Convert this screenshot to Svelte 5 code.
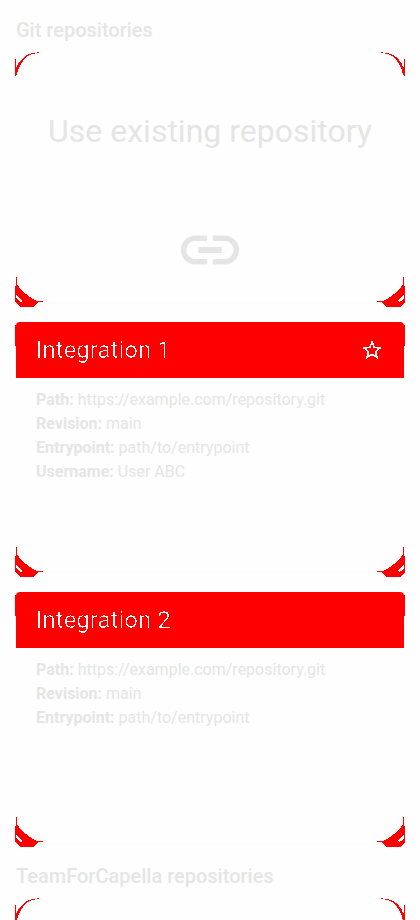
<script>
  const repositories = [
    { name: 'Integration 1', primary: true, rows: [['Path', 'https://example.com/repository.git'], ['Revision', 'main'], ['Entrypoint', 'path/to/entrypoint'], ['Username', 'User ABC']] },
    { name: 'Integration 2', primary: false, rows: [['Path', 'https://example.com/repository.git'], ['Revision', 'main'], ['Entrypoint', 'path/to/entrypoint']] }
  ];
</script>

{#snippet topCorner()}
  <path d="M-1 7H0V15H1L2 12L5 8L8 5L12 2.5L16 1L19 .8V1.5L15 2.3L11 4.8L7 9L4 13.5L2 18L1 23H0V24H-1Z" />
  <path d="M21 0h2v1h-2z" />
{/snippet}

{#snippet bottomCorner()}
  <path fill-rule="evenodd" d="M0 225H1V232L3 235L6 239L10 242L14 245L18 247.5L21 249H27V250H22L21 252L17 255H4L2 253L-1 250V234H0ZM0 243V246L3 249L5 250L6 249L4 246L2 245L1 243Z" />
{/snippet}

{#snippet corners(top)}
  <svg class="corners" viewBox="-1 0 390 256" shape-rendering="crispEdges" fill="red">
    {#if top}
      <g>{@render topCorner()}</g>
      <g transform="translate(388 0) scale(-1 1)">{@render topCorner()}</g>
    {/if}
    <g>{@render bottomCorner()}</g>
    <g transform="translate(388 0) scale(-1 1)">{@render bottomCorner()}</g>
  </svg>
{/snippet}

<svg class="defs" width="0" height="0">
  <filter id="hard-edge" color-interpolation-filters="sRGB">
    <feComponentTransfer><feFuncA type="discrete" tableValues="0 0 1 1" /></feComponentTransfer>
  </filter>
  <filter id="thin-edge" color-interpolation-filters="sRGB">
    <feComponentTransfer><feFuncA type="discrete" tableValues="0 0 0 0 0 1" /></feComponentTransfer>
  </filter>
</svg>

<main>
  <h2>Git repositories</h2>
  <div class="list">
    <section class="card add">
      {@render corners(true)}
      <div class="label">Use existing repository</div>
      <svg class="link" viewBox="0 0 24 24" fill="currentColor"><path d="M3.9 12c0-1.71 1.39-3.1 3.1-3.1h4V7H7c-2.76 0-5 2.24-5 5s2.24 5 5 5h4v-1.9H7c-1.71 0-3.1-1.39-3.1-3.1zM8 13h8v-2H8v2zm9-6h-4v1.9h4c1.71 0 3.1 1.39 3.1 3.1s-1.39 3.1-3.1 3.1h-4V17h4c2.76 0 5-2.24 5-5s-2.24-5-5-5z" /></svg>
    </section>
    {#each repositories as repo}
      <section class="card">
        {@render corners(false)}
        <header>
          <span class="title">{repo.name}</span>
          {#if repo.primary}
            <svg class="star" viewBox="0 0 24 24" fill="currentColor"><path d="M22 9.24l-7.19-.62L12 2 9.19 8.63 2 9.24l5.46 4.73L5.82 21 12 17.27 18.18 21l-1.63-7.03L22 9.24zM12 15.4l-3.76 2.27 1-4.28-3.32-2.88 4.38-.38L12 6.1l1.71 4.04 4.38.38-3.32 2.88 1 4.28L12 15.4z" /></svg>
          {/if}
        </header>
        <div class="details">
          {#each repo.rows as [key, value]}
            <div><b>{key}:</b> {value}</div>
          {/each}
        </div>
      </section>
    {/each}
  </div>
  <h2 class="second">TeamForCapella repositories</h2>
  <section class="card">{@render corners(true)}</section>
</main>

<style>
  :global(body) { background: #fefefe; }
  .defs { position: absolute; }
  main {
    box-sizing: border-box;
    height: 920px;
    overflow: hidden;
    padding: 18px 16px 0;
    font-family: Roboto, sans-serif;
    color: #e5e5e5;
  }
  h2 { margin: 0 0 10px; font-size: 20px; line-height: 24px; font-weight: 500; }
  .second { margin-top: 22px; }
  .list { display: flex; flex-direction: column; gap: 20px; }
  .card {
    position: relative;
    box-sizing: border-box;
    height: 250px;
    border-radius: 4px;
    background: #fefefe;
    box-shadow: 0 1px 3px #00000004;
  }
  .corners { position: absolute; left: -1px; top: 0; width: 390px; height: 256px; pointer-events: none; }
  .add { display: flex; flex-direction: column; align-items: center; }
  .label { margin-top: 60px; font-size: 32px; line-height: 38px; white-space: nowrap; }
  .link { margin-top: 64.5px; width: 70px; height: 70px; }
  header {
    position: relative;
    box-sizing: border-box;
    display: flex;
    align-items: center;
    justify-content: space-between;
    height: 56px;
    padding: 0 20px;
    border-radius: 4px 4px 0 0;
    background: red;
    color: white;
    font-size: 24px;
    font-weight: 400;
  }
  header::before {
    content: '';
    position: absolute;
    z-index: -1;
    left: -1px;
    right: -1px;
    top: 3px;
    height: 21px;
    background: red;
  }
  .title { filter: url(#thin-edge); }
  .star { width: 24px; height: 24px; filter: url(#hard-edge); }
  .details { padding: 10px 20px; font-size: 16px; line-height: 24px; }
  b { font-weight: 700; }
</style>
